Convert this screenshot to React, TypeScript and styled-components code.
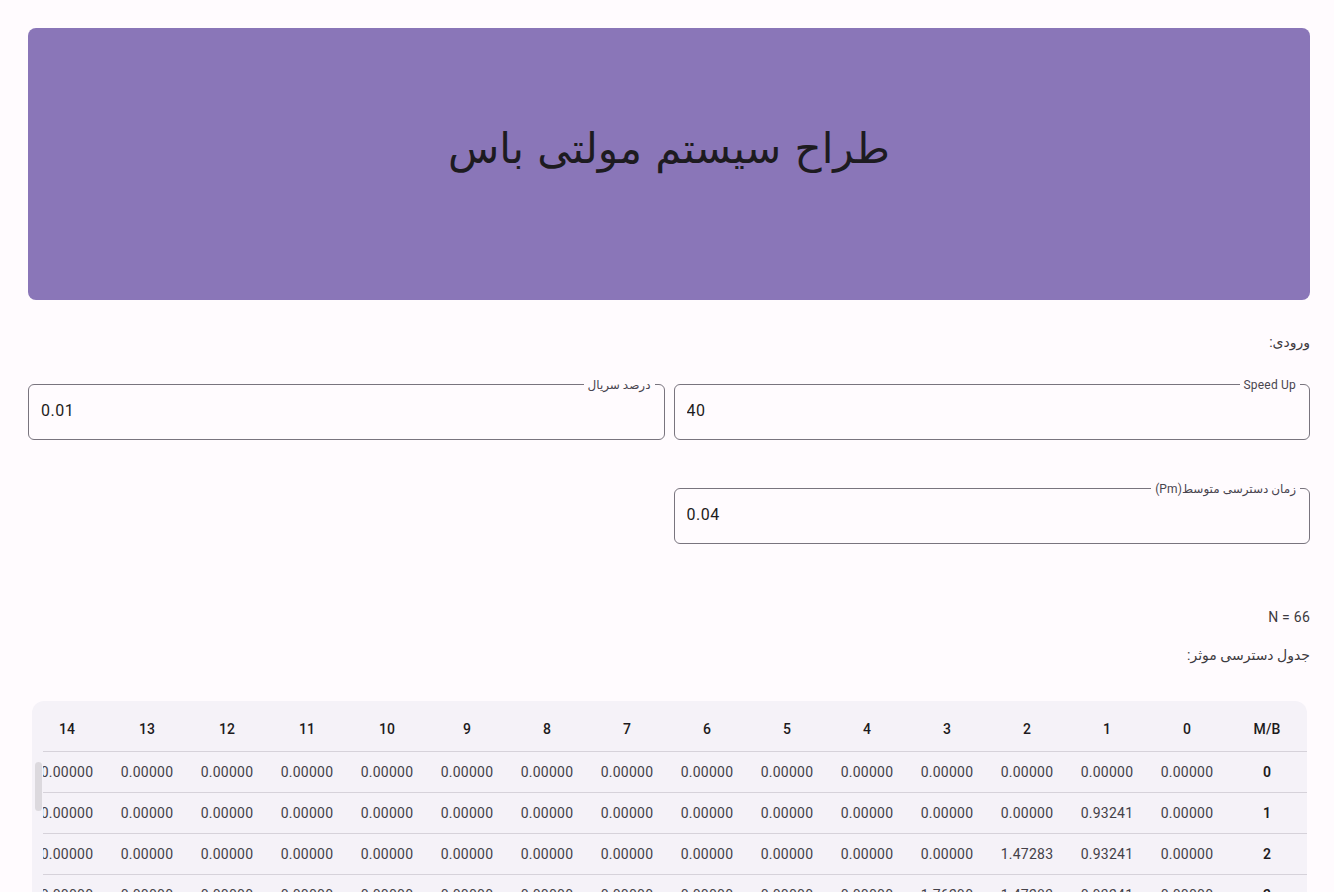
import React from 'react';
import styled, { createGlobalStyle } from 'styled-components';

const GlobalStyle = createGlobalStyle`
  html, body {
    margin: 0;
    padding: 0;
    background: #fffbfe;
    overflow: hidden;
  }
  * {
    box-sizing: border-box;
  }
`;

const Page = styled.div`
  direction: rtl;
  height: 100vh;
  overflow: hidden;
  padding: 28px 24px 0 28px;
  font-family: Roboto, 'DejaVu Sans', sans-serif;
  color: #1d1b20;
`;

const Banner = styled.header`
  height: 272px;
  border-radius: 8px;
  background: #8a76b8;
  display: flex;
  align-items: center;
  justify-content: center;
  padding-bottom: 32px;
`;

const Title = styled.h1`
  margin: 0;
  font-family: 'DejaVu Sans', sans-serif;
  font-weight: 400;
  font-size: 42px;
  color: #1d1b20;
`;

const Caption = styled.div<{ $top: number }>`
  margin-top: ${p => p.$top}px;
  font-size: 14px;
  line-height: 20px;
  letter-spacing: 0.25px;
  color: #3d3a40;
`;

const FieldGrid = styled.div<{ $top: number }>`
  margin-top: ${p => p.$top}px;
  display: grid;
  grid-template-columns: 1fr 1fr;
  column-gap: 9px;
`;

const Field = styled.div`
  position: relative;
  height: 56px;
  border: 1px solid #79747e;
  border-radius: 6px;
  display: flex;
  align-items: center;
`;

const FieldLabel = styled.span`
  position: absolute;
  top: -8px;
  right: 9px;
  padding: 0 4px;
  background: #fffbfe;
  font-size: 12px;
  line-height: 16px;
  letter-spacing: 0.2px;
  color: #49454f;
`;

const FieldInput = styled.input`
  direction: ltr;
  width: 100%;
  border: none;
  outline: none;
  background: transparent;
  padding: 0 12px 3px 12px;
  font-family: Roboto, sans-serif;
  font-size: 16px;
  letter-spacing: 0.5px;
  color: #1d1b20;
  text-align: left;
`;

const TableCard = styled.div`
  position: relative;
  margin: 36px 3px 0 4px;
  background: #f5f2f8;
  border-radius: 12px;
  padding-left: 11px;
  overflow: hidden;
`;

const Viewport = styled.div`
  overflow: hidden;
  direction: rtl;
`;

const Grid = styled.table`
  border-collapse: collapse;
  table-layout: fixed;
  font-family: Roboto, sans-serif;
  font-size: 14px;
`;

const HeadCell = styled.th`
  width: 80px;
  min-width: 80px;
  height: 50px;
  padding: 7px 0 0 0;
  font-weight: 500;
  letter-spacing: 0.1px;
  color: #1d1b20;
  text-align: center;
  border-bottom: 1px solid #d6d2da;
`;

const Cell = styled.td<{ $key?: boolean }>`
  width: 80px;
  height: 41px;
  padding: 0;
  text-align: center;
  white-space: nowrap;
  letter-spacing: 0.25px;
  font-weight: ${p => (p.$key ? 600 : 400)};
  color: ${p => (p.$key ? '#1d1b20' : '#444148')};
  border-bottom: 1px solid #d6d2da;
`;

const ScrollThumb = styled.div`
  position: absolute;
  left: 3px;
  top: 61px;
  width: 7px;
  height: 49px;
  border-radius: 4px;
  background: #dcd9de;
`;

const COLS = 16;
const ROWS = 6;
const values = [0.93241, 1.47283, 1.7629, 1.95121, 2.06314];

const cellValue = (m: number, b: number) => {
  if (b === 0 || b > m) return '0.00000';
  return (values[b - 1] ?? 0).toFixed(5);
};

const App: React.FC = () => {
  const cols = Array.from({ length: COLS }, (_, i) => i);
  const rows = Array.from({ length: ROWS }, (_, i) => i);

  return (
    <>
      <GlobalStyle />
      <Page>
        <Banner>
          <Title>طراح سیستم مولتی باس</Title>
        </Banner>

        <Caption $top={32}>ورودی:</Caption>

        <FieldGrid $top={32}>
          <Field>
            <FieldLabel>Speed Up</FieldLabel>
            <FieldInput defaultValue="40" readOnly />
          </Field>
          <Field>
            <FieldLabel>درصد سریال</FieldLabel>
            <FieldInput defaultValue="0.01" readOnly />
          </Field>
        </FieldGrid>

        <FieldGrid $top={48}>
          <Field>
            <FieldLabel>زمان دسترسی متوسط(Pm)</FieldLabel>
            <FieldInput defaultValue="0.04" readOnly />
          </Field>
        </FieldGrid>

        <Caption $top={63}>N = 66</Caption>
        <Caption $top={18}>جدول دسترسی موثر:</Caption>

        <TableCard>
          <Viewport>
            <Grid>
              <thead>
                <tr>
                  <HeadCell>M/B</HeadCell>
                  {cols.map(c => (
                    <HeadCell key={c}>{c}</HeadCell>
                  ))}
                </tr>
              </thead>
              <tbody>
                {rows.map(m => (
                  <tr key={m}>
                    <Cell $key>{m}</Cell>
                    {cols.map(b => (
                      <Cell key={b}>{cellValue(m, b)}</Cell>
                    ))}
                  </tr>
                ))}
              </tbody>
            </Grid>
          </Viewport>
          <ScrollThumb />
        </TableCard>
      </Page>
    </>
  );
};

export default App;
